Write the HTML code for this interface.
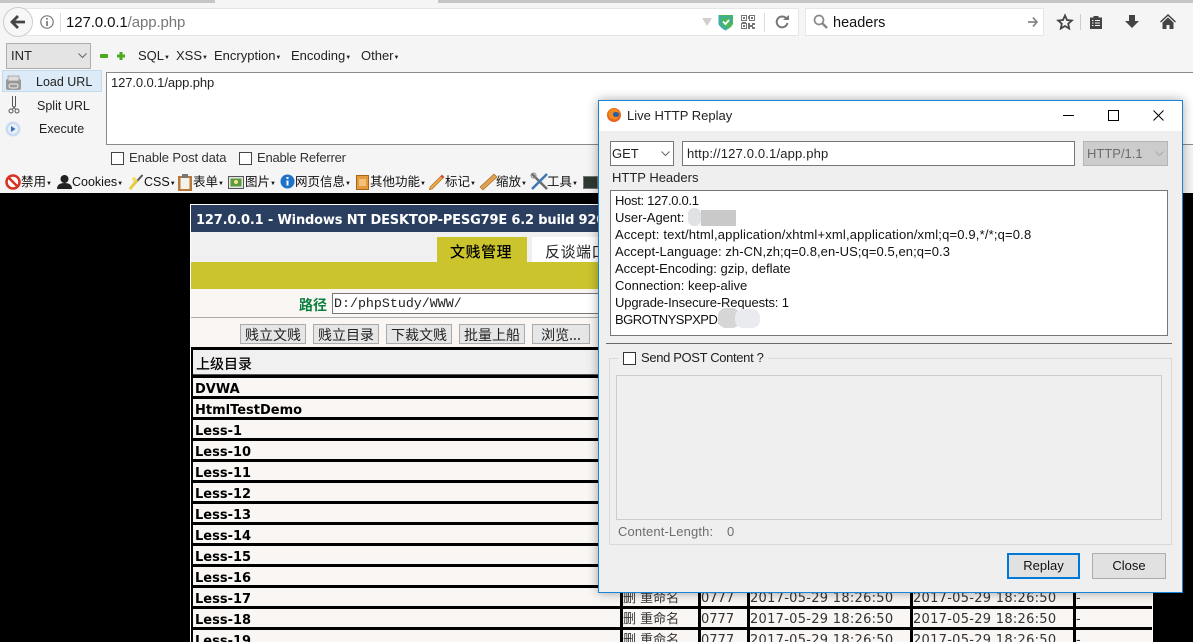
<!DOCTYPE html>
<html style="overflow:hidden;height:642px"><head><meta charset="utf-8"><style>
*{box-sizing:border-box}
html,body{margin:0;padding:0}
body{width:1193px;height:642px;overflow:hidden;position:relative;background:#000;font-family:"Liberation Sans","Noto Sans CJK SC",sans-serif;font-size:13px;color:#222}
#w{position:absolute;left:0;top:0;width:1193px;height:642px;overflow:hidden}
.a{position:absolute;white-space:nowrap}
svg{position:absolute;overflow:visible}
.t{position:absolute;white-space:nowrap;line-height:16px}
.m{font-size:13px;color:#222}
.m span,.fb span{font-size:6px;vertical-align:1px}
.b{position:absolute;top:324px;height:20px;background:#e6e6e6;border:1px solid #aaa;font-size:14px;line-height:21px;text-align:center;color:#222;overflow:hidden;font-family:"Noto Sans CJK SC",sans-serif}
.r{position:absolute;left:191px;width:961px;height:21px;background:#f9f6f3;border-bottom:3px solid #000;border-left:2px solid #000;font:bold 13px/20px "DejaVu Sans",sans-serif;color:#000}
.r span{position:absolute;left:2px;top:2px}
.r i{position:absolute;top:-3px;bottom:-3px;width:3px;background:#000}
.r u{position:absolute;top:1px;text-decoration:none;font:13px/19px "DejaVu Sans","Noto Sans CJK SC",sans-serif;color:#333;white-space:nowrap}
.r u.d{letter-spacing:.28px}
.h{position:absolute;left:615px;font-size:13px;line-height:17px;color:#111;white-space:nowrap}
.fb{position:absolute;top:174px;font:12.5px/16px "Liberation Sans","Noto Sans CJK SC",sans-serif;color:#111;white-space:nowrap}
</style></head><body><div id="w">
<!-- browser chrome -->
<div class="a" style="left:0;top:0;width:1193px;height:193px;background:#f5f5f5"></div>
<div class="a" style="left:0;top:0;width:215px;height:3px;background:#c6c6c6"></div>
<div class="a" style="left:438px;top:0;width:755px;height:3px;background:#c6c6c6"></div>
<div class="a" style="left:24px;top:8px;width:775px;height:28px;background:#fff;border:1px solid #e6e6e6;border-left:0"></div>
<div class="a" style="left:3px;top:7px;width:30px;height:30px;border-radius:50%;background:#f7f7f7;border:1px solid #ccc"></div>
<svg style="left:10px;top:14px" width="16" height="16" viewBox="0 0 16 16"><path d="M8 2 2 8l6 6M2.500 8H15" fill="none" stroke="#444" stroke-width="2.800"/></svg>
<svg style="left:40px;top:15px" width="14" height="14" viewBox="0 0 14 14"><circle cx="7" cy="7" r="6.200" fill="none" stroke="#777" stroke-width="1.200"/><path d="M7 6v5M7 3v1.600" stroke="#666" stroke-width="1.500"/></svg>
<div class="a" style="left:60px;top:13px;width:1px;height:19px;background:#ddd"></div>
<div class="t" style="left:66px;top:15px;font-size:15px;letter-spacing:-.1px;color:#111">127.0.0.1<span style="color:#777">/app.php</span></div>
<svg style="left:702px;top:18px" width="10" height="8"><path d="M0 0h10L5 8z" fill="#cfcfcf"/></svg>
<svg style="left:719px;top:15px" width="14" height="15" viewBox="0 0 14 15"><path d="M0 0h14v9q-2 4-7 6-5-2-7-6z" fill="#4cb85c"/><path d="M0 0v9q2 4 7 6v-2Q3 11 2 8V2h10v6" fill="none" stroke="#39a6c9" stroke-width="1"/><path d="M4 6.500l2.500 2.500 3.500-4" stroke="#fff" stroke-width="1.800" fill="none"/></svg>
<svg style="left:741px;top:15px" width="14" height="14" viewBox="0 0 14 14" fill="none" stroke="#777"><rect x=".5" y=".5" width="5" height="5"/><rect x="8.500" y=".5" width="5" height="5"/><rect x=".5" y="8.500" width="5" height="5"/><path d="M2 2h2v2H2zM10 2h2v2h-2zM2 10h2v2H2z" fill="#777" stroke="none"/><path d="M7 8h2v2h2V8h3v2h-2v2h2v2h-3v-2H9v2H7zM7 1h1v3H7zM1 7h4v1H1z" fill="#777" stroke="none"/></svg>
<div class="a" style="left:764px;top:13px;width:1px;height:19px;background:#ddd"></div>
<svg style="left:775px;top:15px" width="14" height="14" viewBox="0 0 14 14"><path d="M11.500 3.800A5.400 5.400 0 1 0 12.400 8" fill="none" stroke="#777" stroke-width="2"/><path d="M8 5h6V0z" fill="#777"/></svg>
<div class="a" style="left:805px;top:8px;width:239px;height:28px;background:#fff;border:1px solid #e6e6e6"></div>
<svg style="left:813px;top:14px" width="15" height="15" viewBox="0 0 15 15"><circle cx="6" cy="6" r="4.500" fill="none" stroke="#888" stroke-width="1.700"/><path d="M9.500 9.500 14 14" stroke="#888" stroke-width="2.400"/></svg>
<div class="t" style="left:833px;top:15px;font-size:14.500px;color:#111">headers</div>
<svg style="left:1028px;top:17px" width="10" height="10" viewBox="0 0 10 10"><path d="M5 .5 9 5 5 9.500M9 5H0" fill="none" stroke="#888" stroke-width="1.700"/></svg>
<svg style="left:1057px;top:14px" width="16" height="16" viewBox="0 0 16 16"><path d="M8 1.500l2 4.500 4.800.5-3.600 3.200 1 4.800L8 12l-4.200 2.500 1-4.800L1.200 6.500 6 6z" fill="none" stroke="#444" stroke-width="1.800"/></svg>
<div class="a" style="left:1080px;top:14px;width:1px;height:16px;background:#ccc"></div>
<svg style="left:1089px;top:15px" width="14" height="14" viewBox="0 0 14 14"><path d="M1 2.500h3.500V1h5v1.500H13V14H1z" fill="#444"/><path d="M3 5.500h1.500M6 5.500h5M3 8h1.500M6 8h5M3 10.500h1.500M6 10.500h5" stroke="#f5f5f5" stroke-width="1.100"/></svg>
<svg style="left:1125px;top:15px" width="14" height="14" viewBox="0 0 14 14"><path d="M4 0h6v6h4l-7 7-7-7h4z" fill="#444"/></svg>
<svg style="left:1160px;top:14px" width="16" height="15" viewBox="0 0 16 15"><path d="M8 0 0 7.500l1 1L8 2l7 6.500 1-1z" fill="#444"/><path d="M8 3.500 2.500 8.500V15h4v-4h3v4h4V8.500z" fill="#444"/></svg>
<!-- hackbar -->
<div class="a" style="left:6px;top:43px;width:85px;height:26px;background:#e4e4e4;border:1px solid #adadad"></div>
<div class="t" style="left:11px;top:48px;font-size:13px;color:#222">INT</div>
<svg style="left:78px;top:53px" width="9" height="6"><path d="M.5.500 4.500 4.500 8.500.5" fill="none" stroke="#666"/></svg>
<div class="a" style="left:100px;top:54px;width:8px;height:4px;background:#4caa1e;border-radius:1px"></div>
<svg style="left:117px;top:52px" width="8" height="8"><path d="M2.500 0h3v2.500H8v3H5.500V8h-3V5.500H0v-3h2.500z" fill="#4caa1e"/></svg>
<div class="t m" style="left:138px;top:48px">SQL<span>▼</span></div>
<div class="t m" style="left:176px;top:48px">XSS<span>▼</span></div>
<div class="t m" style="left:214px;top:48px">Encryption<span>▼</span></div>
<div class="t m" style="left:291px;top:48px">Encoding<span>▼</span></div>
<div class="t m" style="left:361px;top:48px">Other<span>▼</span></div>
<div class="a" style="left:2px;top:70px;width:100px;height:22px;background:#dcebf7;border:1px solid #c5dcef"></div>
<svg style="left:5px;top:75px" width="17" height="16" viewBox="0 0 17 16"><rect x="1" y="4" width="15" height="11" rx="2" fill="#9a9a9a"/><rect x="3" y="1" width="11" height="5" fill="#ddd" stroke="#888" stroke-width=".6"/><rect x="4" y="9" width="9" height="4" rx="2" fill="none" stroke="#eee"/></svg>
<div class="t" style="left:36px;top:74px;font-size:12.500px;color:#222">Load URL</div>
<svg style="left:8px;top:96px" width="12" height="18" viewBox="0 0 12 18" fill="none" stroke="#555"><path d="M4.500 0v10l3 3M7.500 0v10l-3 3" /><circle cx="3" cy="15" r="2"/><circle cx="9" cy="15" r="2"/></svg>
<div class="t" style="left:37px;top:98px;font-size:12.500px;color:#222">Split URL</div>
<svg style="left:5px;top:121px" width="16" height="16"><circle cx="8" cy="8" r="7.500" fill="#c9dcf2"/><circle cx="8" cy="8" r="5" fill="#e8f0fa"/><path d="M6 5l4.500 3L6 11z" fill="#3a6fb8"/></svg>
<div class="t" style="left:39px;top:121px;font-size:12.500px;color:#222">Execute</div>
<div class="a" style="left:106px;top:72px;width:1087px;height:73px;background:#fff;border:1px solid #8a8a8a;border-right:0"></div>
<div class="t" style="left:111px;top:75px;letter-spacing:-.1px;color:#222">127.0.0.1/app.php</div>
<div class="a" style="left:111px;top:152px;width:13px;height:13px;background:#fff;border:1px solid #444"></div>
<div class="t" style="left:129px;top:150px;letter-spacing:-.1px;color:#333">Enable Post data</div>
<div class="a" style="left:239px;top:152px;width:13px;height:13px;background:#fff;border:1px solid #444"></div>
<div class="t" style="left:257px;top:150px;letter-spacing:-.2px;color:#333">Enable Referrer</div>
<!-- firefox web developer bar -->
<svg style="left:5px;top:174px" width="16" height="16"><circle cx="8" cy="8" r="6.500" fill="#fff" stroke="#d8311f" stroke-width="2.500"/><path d="M3.500 3.500l9 9" stroke="#d8311f" stroke-width="2.500"/></svg>
<div class="fb" style="left:21px">禁用<span>▼</span></div>
<svg style="left:57px;top:174px" width="15" height="16" viewBox="0 0 15 16"><circle cx="7.500" cy="5" r="4" fill="#222"/><path d="M0 15q0-6 7.500-6T15 15z" fill="#222"/></svg>
<div class="fb" style="left:72px">Cookies<span>▼</span></div>
<svg style="left:128px;top:174px" width="16" height="17" viewBox="0 0 16 17"><path d="M14.500 1 2 15" stroke="#555" stroke-width="2"/><path d="M9 6 2 15" stroke="#e8cc40" stroke-width="3"/><circle cx="6" cy="5" r="2" fill="#f6e06a"/></svg>
<div class="fb" style="left:144px">CSS<span>▼</span></div>
<svg style="left:178px;top:174px" width="14" height="17" viewBox="0 0 14 17"><rect x="0" y="2" width="14" height="15" fill="#b8793a"/><rect x="2.500" y="4" width="9" height="11" fill="#f5f2ea"/><rect x="4" y="0" width="6" height="4" fill="#777"/></svg>
<div class="fb" style="left:193px">表单<span>▼</span></div>
<svg style="left:228px;top:176px" width="16" height="13"><rect x=".5" y=".5" width="15" height="12" fill="#e8e8d8" stroke="#556"/><rect x="2.500" y="2.500" width="11" height="8" fill="#5b9a3f"/><circle cx="8" cy="6" r="2" fill="#f4e48a"/></svg>
<div class="fb" style="left:245px">图片<span>▼</span></div>
<svg style="left:280px;top:174px" width="15" height="15"><circle cx="7.500" cy="7.500" r="7" fill="#1e73c8"/><path d="M7.500 6.500v5M7.500 3v2" stroke="#fff" stroke-width="2"/></svg>
<div class="fb" style="left:295px">网页信息<span>▼</span></div>
<svg style="left:356px;top:175px" width="13" height="15"><rect x=".5" y=".5" width="12" height="14" fill="#e59a3c" stroke="#a8641c"/><path d="M3 4h7v7H3z" fill="#f2c27a"/></svg>
<div class="fb" style="left:370px">其他功能<span>▼</span></div>
<svg style="left:429px;top:174px" width="16" height="16" viewBox="0 0 16 16"><path d="M13 1 1 13l-.5 2.500L3 15 15 3z" fill="#eda94a" stroke="#b06e20" stroke-width=".7"/><path d="M13 1l2 2-1.500 1.500-2-2z" fill="#d04a4a"/></svg>
<div class="fb" style="left:445px">标记<span>▼</span></div>
<svg style="left:480px;top:174px" width="17" height="16" viewBox="0 0 17 16"><path d="M14 0l3 3L3 16l-3-3z" fill="#dfa050" stroke="#9d6422" stroke-width=".6"/></svg>
<div class="fb" style="left:496px">缩放<span>▼</span></div>
<svg style="left:531px;top:173px" width="17" height="17" viewBox="0 0 17 17"><path d="M1 1l15 15" stroke="#6d6d6d" stroke-width="2.500"/><path d="M16 1 1 16" stroke="#3c76b8" stroke-width="2.500"/><circle cx="2.500" cy="2.500" r="2.500" fill="none" stroke="#888"/></svg>
<div class="fb" style="left:547px">工具<span>▼</span></div>
<div class="a" style="left:583px;top:176px;width:15px;height:13px;background:#2f3a33;border:1px solid #777"></div>
<!-- web page -->
<div class="a" style="left:190px;top:204px;width:963px;height:438px;background:#f9f6f3;border:1px solid #fff;border-bottom:0"></div>
<div class="a" style="left:191px;top:205px;width:961px;height:27px;background:#2a3f5f"></div>
<div class="t" style="left:196px;top:213px;font:bold 13px/16px 'DejaVu Sans',sans-serif;color:#fff;letter-spacing:-.17px;width:402px;overflow:hidden">127.0.0.1 - Windows NT DESKTOP-PESG79E 6.2 build 9200</div>
<div class="a" style="left:191px;top:232px;width:961px;height:30px;background:#f0f0f0"></div>
<div class="a" style="left:437px;top:237px;width:90px;height:25px;background:#cbc42d"></div>
<div class="t" style="left:450px;top:243px;font:500 15px/18px 'Noto Sans CJK SC',sans-serif;color:#000;letter-spacing:.5px">文贱管理</div>
<div class="a" style="left:532px;top:237px;width:90px;height:25px;background:#fff"></div>
<div class="t" style="left:545px;top:243px;font:15px/18px 'Noto Sans CJK SC',sans-serif;color:#222;letter-spacing:.5px">反谈端口</div>
<div class="a" style="left:191px;top:262px;width:961px;height:27px;background:#cbc42d"></div>
<div class="a" style="left:191px;top:317px;width:961px;height:1px;background:#aaa"></div>
<div class="t" style="left:299px;top:296px;font:bold 14px/18px 'Noto Sans CJK SC',sans-serif;color:#0b7f3d">路径</div>
<div class="a" style="left:332px;top:293px;width:300px;height:21px;background:#fff;border:1px solid #777"></div>
<div class="t" style="left:334px;top:296px;font:13.300px/15px 'Liberation Mono',monospace;color:#222">D:/phpStudy/WWW/</div>
<div class="b" style="left:240px;width:66px">贱立文贱</div>
<div class="b" style="left:313px;width:66px">贱立目录</div>
<div class="b" style="left:386px;width:66px">下裁文贱</div>
<div class="b" style="left:459px;width:66px">批量上船</div>
<div class="b" style="left:532px;width:58px">浏览...</div>
<div class="a" style="left:191px;top:347px;width:961px;height:295px;background:#000"></div>
<div class="a" style="left:193px;top:350px;width:957px;height:25px;background:#f0f0f0;border-bottom:1px solid #555"></div>
<div class="t" style="left:196px;top:356px;font:500 14px/16px 'Noto Sans CJK SC',sans-serif;color:#000">上级目录</div>
<div class="r" style="top:378px"><span>DVWA</span></div>
<div class="r" style="top:399px"><span>HtmlTestDemo</span></div>
<div class="r" style="top:420px"><span>Less-1</span></div>
<div class="r" style="top:441px"><span>Less-10</span></div>
<div class="r" style="top:462px"><span>Less-11</span></div>
<div class="r" style="top:483px"><span>Less-12</span></div>
<div class="r" style="top:504px"><span>Less-13</span></div>
<div class="r" style="top:525px"><span>Less-14</span></div>
<div class="r" style="top:546px"><span>Less-15</span></div>
<div class="r" style="top:567px"><span>Less-16</span></div>
<div class="r" style="top:588px"><span>Less-17</span><i style="left:427px"></i><i style="left:505px"></i><i style="left:554px"></i><i style="left:717px"></i><i style="left:880px"></i><u style="left:430px">删 重命名</u><u style="left:508px">0777</u><u class="d" style="left:557px">2017-05-29 18:26:50</u><u class="d" style="left:720px">2017-05-29 18:26:50</u><u style="left:883px">-</u></div>
<div class="r" style="top:609px"><span>Less-18</span><i style="left:427px"></i><i style="left:505px"></i><i style="left:554px"></i><i style="left:717px"></i><i style="left:880px"></i><u style="left:430px">删 重命名</u><u style="left:508px">0777</u><u class="d" style="left:557px">2017-05-29 18:26:50</u><u class="d" style="left:720px">2017-05-29 18:26:50</u><u style="left:883px">-</u></div>
<div class="r" style="top:630px"><span>Less-19</span><i style="left:427px"></i><i style="left:505px"></i><i style="left:554px"></i><i style="left:717px"></i><i style="left:880px"></i><u style="left:430px">删 重命名</u><u style="left:508px">0777</u><u class="d" style="left:557px">2017-05-29 18:26:50</u><u class="d" style="left:720px">2017-05-29 18:26:50</u><u style="left:883px">-</u></div>
<!-- dialog -->
<div class="a" style="left:598px;top:100px;width:585px;height:493px;background:#efefef;border:1px solid #1883d7;box-shadow:0 0 10px rgba(0,0,0,.35)"></div>
<div class="a" style="left:599px;top:101px;width:583px;height:30px;background:#fff"></div>
<svg style="left:607px;top:108px" width="14" height="14" viewBox="0 0 14 14"><circle cx="7" cy="7" r="7" fill="#e8641c"/><circle cx="8" cy="6" r="4" fill="#2a5fa8"/><path d="M2 3q3-3 7-2 4 2 4 6-1-3-4-3-3 0-3 2 0 3 3 3 2 0 3-1-2 5-7 3Q0 9 2 3z" fill="#f08a1e"/></svg>
<div class="t" style="left:627px;top:108px;color:#222">Live HTTP Replay</div>
<div class="a" style="left:1063px;top:115px;width:11px;height:1px;background:#000"></div>
<div class="a" style="left:1108px;top:110px;width:11px;height:11px;border:1px solid #000"></div>
<svg style="left:1153px;top:110px" width="11" height="11"><path d="M.5.500l10 10M10.500.5l-10 10" stroke="#000" fill="none"/></svg>
<div class="a" style="left:610px;top:141px;width:64px;height:25px;background:#fff;border:1px solid #777"></div>
<div class="t" style="left:612px;top:146px;color:#222">GET</div>
<svg style="left:661px;top:151px" width="9" height="6"><path d="M.5.500 4.500 4.500 8.500.5" fill="none" stroke="#666"/></svg>
<div class="a" style="left:682px;top:141px;width:393px;height:25px;background:#fff;border:1px solid #777"></div>
<div class="t" style="left:687px;top:146px;letter-spacing:.17px;color:#222">http://127.0.0.1/app.php</div>
<div class="a" style="left:1083px;top:141px;width:85px;height:25px;background:#ccc;border:1px solid #b5b5b5"></div>
<div class="t" style="left:1087px;top:146px;color:#6d6d6d">HTTP/1.1</div>
<svg style="left:1155px;top:151px" width="9" height="6"><path d="M.5.500 4.500 4.500 8.500.5" fill="none" stroke="#aaa"/></svg>
<div class="t" style="left:612px;top:170px;color:#222">HTTP Headers</div>
<div class="a" style="left:610px;top:190px;width:558px;height:146px;background:#fff;border:1px solid #777"></div>
<div class="h" style="top:192px;letter-spacing:-.3px">Host: 127.0.0.1</div>
<div class="h" style="top:209px">User-Agent:</div>
<div class="h" style="top:226px;letter-spacing:.17px">Accept: text/html,application/xhtml+xml,application/xml;q=0.9,*/*;q=0.8</div>
<div class="h" style="top:243px;letter-spacing:.07px">Accept-Language: zh-CN,zh;q=0.8,en-US;q=0.5,en;q=0.3</div>
<div class="h" style="top:260px">Accept-Encoding: gzip, deflate</div>
<div class="h" style="top:277px">Connection: keep-alive</div>
<div class="h" style="top:294px;letter-spacing:-.14px">Upgrade-Insecure-Requests: 1</div>
<div class="h" style="top:311px;letter-spacing:-.5px">BGROTNYSPXPD:</div>
<div class="a" style="left:688px;top:208px;width:13px;height:18px;background:#e0e3e4;border-radius:6px"></div>
<div class="a" style="left:701px;top:210px;width:35px;height:16px;background:#c9c9c9"></div>
<div class="a" style="left:718px;top:308px;width:22px;height:20px;background:#d6d6d6;border-radius:8px"></div>
<div class="a" style="left:735px;top:309px;width:25px;height:19px;background:#e9ebee;border-radius:8px"></div>
<div class="a" style="left:606px;top:343px;width:566px;height:1px;background:#6a6a6a"></div>
<div class="a" style="left:609px;top:358px;width:563px;height:187px;border:1px solid #d9d9d9"></div>
<div class="a" style="left:618px;top:350px;width:150px;height:16px;background:#efefef"></div>
<div class="a" style="left:623px;top:352px;width:13px;height:13px;background:#fff;border:1px solid #333"></div>
<div class="t" style="left:641px;top:350px;letter-spacing:-.35px;color:#222">Send POST Content ?</div>
<div class="a" style="left:616px;top:375px;width:546px;height:145px;background:#efefef;border:1px solid #ccc"></div>
<div class="t" style="left:618px;top:524px;letter-spacing:.13px;color:#6d6d6d">Content-Length:</div>
<div class="t" style="left:727px;top:524px;color:#6d6d6d">0</div>
<div class="a" style="left:1007px;top:553px;width:73px;height:26px;background:#e1e1e1;border:2px solid #0078d7;text-align:center;line-height:22px;color:#111">Replay</div>
<div class="a" style="left:1092px;top:553px;width:74px;height:26px;background:#e1e1e1;border:1px solid #adadad;text-align:center;line-height:24px;color:#111">Close</div>
</div></body></html>
